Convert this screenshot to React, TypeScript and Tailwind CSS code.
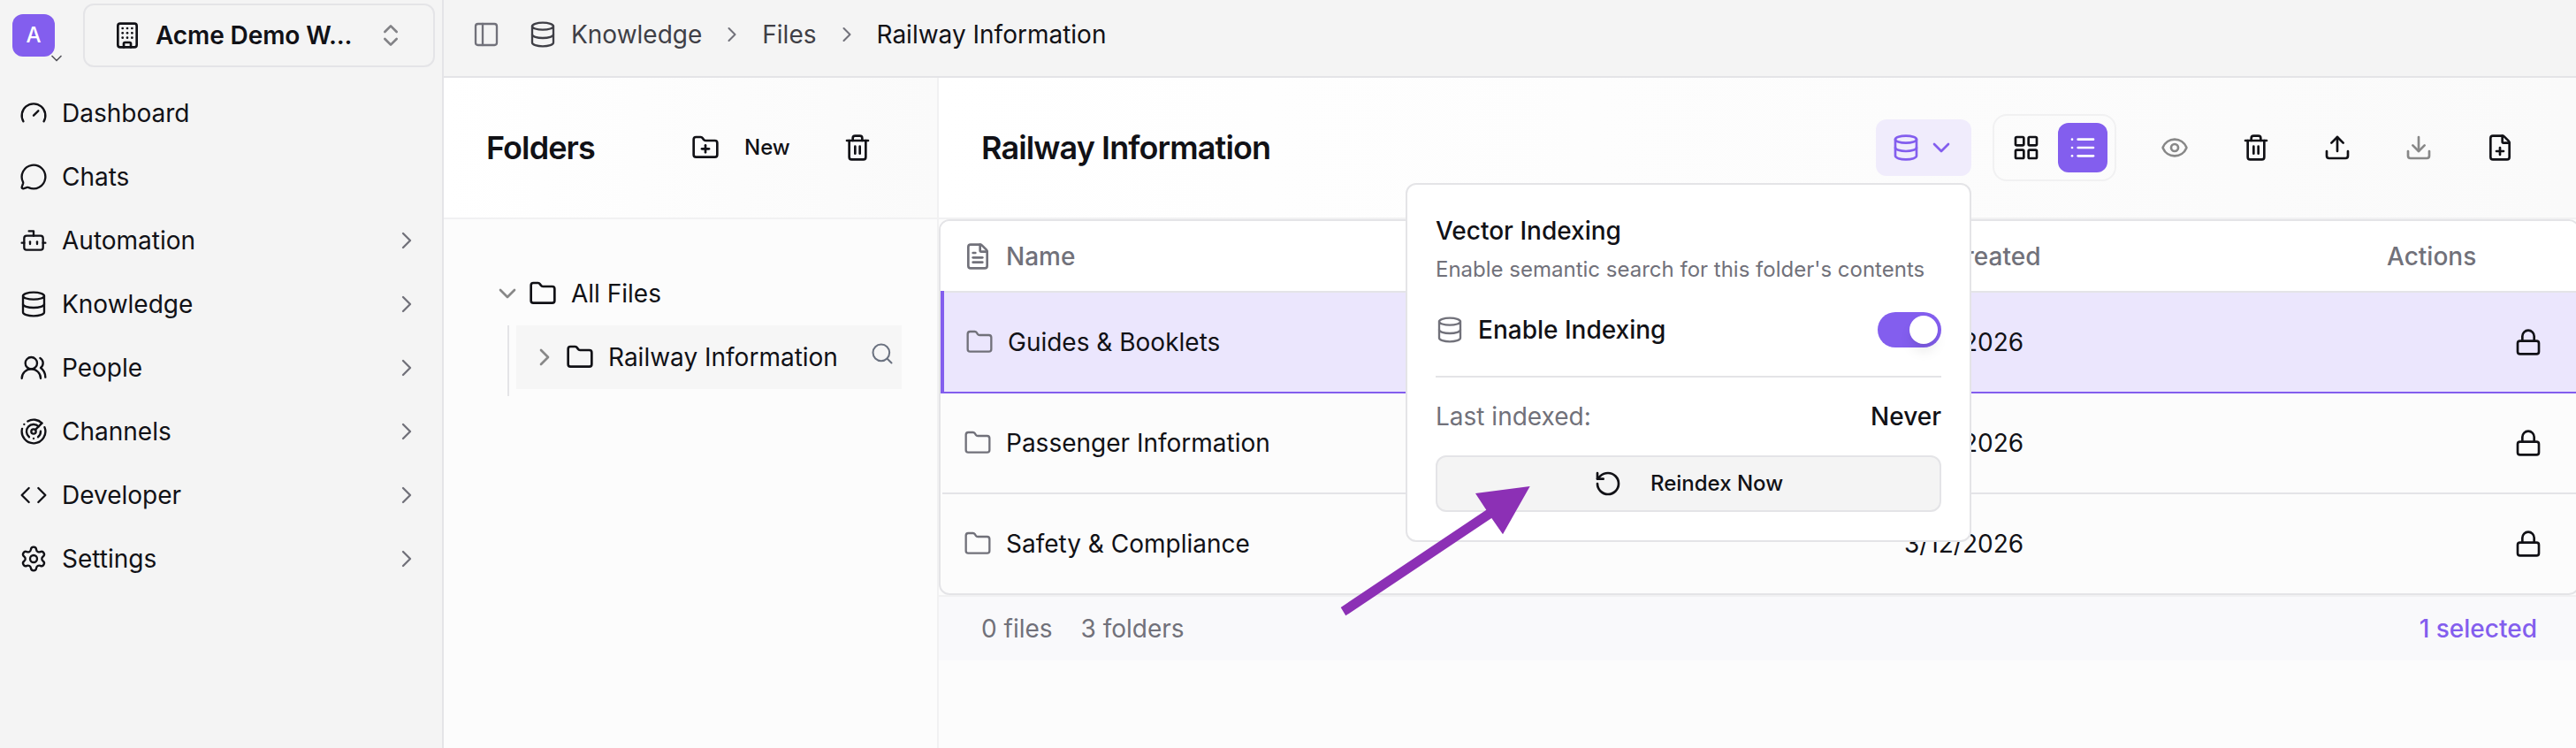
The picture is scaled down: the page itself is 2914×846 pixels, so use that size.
import React from "react";
import {
  Bot,
  Building,
  Calendar,
  ChevronDown,
  ChevronRight,
  ChevronsUpDown,
  Code,
  Database,
  Download,
  Eye,
  FilePlus,
  FileText,
  Folder,
  FolderPlus,
  Gauge,
  LayoutGrid,
  List,
  Lock,
  MessageCircle,
  PanelLeft,
  Radar,
  RotateCcw,
  Search,
  Settings,
  Trash2,
  Upload,
  UsersRound,
} from "lucide-react";

const navItems = [
  { label: "Dashboard", icon: Gauge, expandable: false },
  { label: "Chats", icon: MessageCircle, expandable: false },
  { label: "Automation", icon: Bot, expandable: true },
  { label: "Knowledge", icon: Database, expandable: true },
  { label: "People", icon: UsersRound, expandable: true },
  { label: "Channels", icon: Radar, expandable: true },
  { label: "Developer", icon: Code, expandable: true },
  { label: "Settings", icon: Settings, expandable: true },
];

const rows = [
  { name: "Guides & Booklets", created: "3/12/2026", selected: true },
  { name: "Passenger Information", created: "3/12/2026", selected: false },
  { name: "Safety & Compliance", created: "3/12/2026", selected: false },
];

function Sidebar() {
  return (
    <aside className="flex w-[502px] shrink-0 flex-col border-r-2 border-[#e4e4e7] bg-[#f4f4f4]">
      <div className="flex h-20 items-center pl-3.5">
        <div className="relative flex size-12 items-center justify-center rounded-xl bg-[#835eee] text-2xl font-medium text-white">
          A
          <ChevronDown className="absolute -right-3 -bottom-3 size-5 text-[#55555b]" />
        </div>
        <div className="ml-8 flex h-[72px] w-[398px] items-center rounded-xl border-2 border-[#e4e4e7] pl-8">
          <Building className="size-8" />
          <span className="ml-4 w-[223px] font-semibold tracking-[-0.1px] whitespace-nowrap">Acme Demo W...</span>
          <ChevronsUpDown className="ml-[27px] size-8 text-[#828286]" />
        </div>
      </div>
      <nav className="mt-3 flex flex-col">
        {navItems.map(({ label, icon: Icon, expandable }) => (
          <div key={label} className="flex h-[72px] items-center pr-6 pl-[22px]">
            <Icon strokeWidth={1.75} className="size-8" />
            <span className="ml-4 flex-1">{label}</span>
            {expandable && <ChevronRight strokeWidth={1.75} className="size-8 text-[#71717a]" />}
          </div>
        ))}
      </nav>
    </aside>
  );
}

function Breadcrumb() {
  return (
    <header className="flex h-[88px] shrink-0 items-start border-b-2 border-[#e4e4e7] bg-[#f4f4f4] pl-8">
      <div className="flex h-[78px] items-center text-[#3f3f46]">
        <PanelLeft strokeWidth={1.75} className="size-8 text-[#71717a]" />
        <Database strokeWidth={1.75} className="ml-8 size-8" />
        <span className="ml-4">Knowledge</span>
        <ChevronRight strokeWidth={1.75} className="ml-5 size-7 text-[#71717a]" />
        <span className="ml-5">Files</span>
        <ChevronRight strokeWidth={1.75} className="ml-5 size-7 text-[#71717a]" />
        <span className="ml-5 text-[#111116]">Railway Information</span>
      </div>
    </header>
  );
}

function FolderPanel() {
  return (
    <section className="flex w-[560px] shrink-0 flex-col border-r-2 border-[#f1f1f2]">
      <div className="flex h-40 shrink-0 items-center border-b-2 border-[#f1f1f2] bg-linear-to-r from-white to-[#fafafa] pl-12">
        <h2 className="w-[232px] text-4xl font-semibold tracking-tight">Folders</h2>
        <FolderPlus className="size-8" />
        <span className="ml-7 w-28 text-2xl font-medium">New</span>
        <Trash2 className="size-8" />
      </div>
      <div className="flex flex-col pt-12 pl-14">
        <div className="flex h-[72px] items-center">
          <ChevronDown className="size-8 text-[#888888]" />
          <Folder className="ml-2 size-8" />
          <span className="ml-4">All Files</span>
        </div>
        <div className="ml-4 flex h-20 items-start border-l-2 border-[#e4e4e7] pl-2">
          <div className="flex h-[72px] w-[436px] items-center bg-[#f6f6f6] pl-4">
            <ChevronRight className="size-8 text-[#888888]" />
            <Folder className="ml-2 size-8" />
            <span className="ml-4 w-[296px]">Railway Information</span>
            <Search strokeWidth={1.75} className="-mt-2 size-7 text-[#6b7280]" />
          </div>
        </div>
      </div>
    </section>
  );
}

function IndexingPopover() {
  return (
    <div className="absolute top-[72px] right-0 flex h-[406px] w-[640px] flex-col rounded-xl border-2 border-[#e4e4e7] bg-white px-8 pt-8">
      <h3 className="h-10 leading-10 font-medium">Vector Indexing</h3>
      <p className="mt-1.5 h-9 text-2xl leading-9 text-[#71717a]">Enable semantic search for this folder's contents</p>
      <div className="mt-[30px] flex h-10 items-center">
        <Database strokeWidth={1.75} className="size-8 text-[#71717a]" />
        <span className="ml-4 flex-1 font-medium">Enable Indexing</span>
        <div className="flex h-10 w-[72px] items-center justify-end rounded-full bg-[#835eee] pr-1">
          <div className="size-8 rounded-full bg-white shadow-lg" />
        </div>
      </div>
      <div className="mt-8 h-0.5 bg-[#e4e4e7]" />
      <div className="mt-6 flex h-10 items-center justify-between">
        <span className="text-[#71717a]">Last indexed:</span>
        <span className="font-medium">Never</span>
      </div>
      <div className="mt-6 flex h-16 items-center justify-center gap-8 rounded-xl border-2 border-[#e4e4e7] bg-[#f4f4f4] text-2xl font-medium">
        <RotateCcw className="size-8" />
        Reindex Now
      </div>
    </div>
  );
}

function Toolbar() {
  return (
    <div className="flex items-center">
      <div className="relative z-10 flex h-16 w-[108px] items-center gap-2 rounded-xl bg-[#f0ecfc] pl-[18px] text-[#835eee]">
        <Database className="size-8" />
        <ChevronDown className="size-8" />
        <div className="contents text-[#111116]">
          <IndexingPopover />
        </div>
      </div>
      <div className="ml-6 flex h-[76px] w-[140px] items-center gap-2 rounded-2xl border-2 border-[#f1f1f2] pl-2">
        <div className="flex size-14 items-center justify-center">
          <LayoutGrid className="size-8" />
        </div>
        <div className="flex size-14 items-center justify-center rounded-xl bg-[#835eee] text-white">
          <List className="size-8" />
        </div>
      </div>
      <div className="ml-[50px] flex gap-[60px]">
        <Eye className="size-8 text-[#888888]" />
        <Trash2 className="size-8" />
        <Upload className="size-8" />
        <Download className="size-8 text-[#888888]" />
        <FilePlus className="size-8" />
      </div>
    </div>
  );
}

function FileTable() {
  return (
    <div className="-mr-1 flex h-[425px] shrink-0 flex-col overflow-hidden rounded-xl border-2 border-[#e4e4e7]">
      <div className="flex h-[79px] shrink-0 items-center bg-white pl-[26px] font-medium text-[#71717a]">
        <FileText className="size-8" />
        <span className="ml-4 w-[1016px]">Name</span>
        <Calendar className="size-8" />
        <span className="ml-4 w-[498px]">Created</span>
        <span>Actions</span>
      </div>
      {rows.map((row) =>
        row.selected ? (
          <div key={row.name} className="flex h-[116px] shrink-0 bg-[#ebe6fd]">
            <div className="w-1 bg-[#835eee]" />
            <div className="flex flex-1 items-center border-t-2 border-b-2 border-t-[#e4e4e7] border-b-[#835eee] pl-6">
              <Folder strokeWidth={1.75} className="size-8 text-[#71717a]" />
              <span className="ml-4 w-[1014px]">{row.name}</span>
              <span className="w-[690px]">{row.created}</span>
              <Lock className="size-8" />
            </div>
          </div>
        ) : (
          <div key={row.name} className="ml-0.5 flex h-[114px] shrink-0 items-center border-b-2 border-[#e4e4e7] pl-6">
            <Folder strokeWidth={1.75} className="size-8 text-[#71717a]" />
            <span className="ml-4 w-[1016px]">{row.name}</span>
            <span className="w-[690px]">{row.created}</span>
            <Lock className="size-8" />
          </div>
        )
      )}
    </div>
  );
}

function Annotation() {
  return (
    <svg className="absolute top-[540px] left-[1500px] z-20" width="250" height="170" viewBox="0 0 250 170" fill="#8c30b5">
      <path d="M16.7 147 L181.3 36.7 L169 18 L230.7 10 L200 64.3 L187.3 46 L22.3 156.3 Z" />
    </svg>
  );
}

export default function App() {
  return (
    <div className="relative flex h-[846px] w-[2914px] overflow-hidden bg-[#fcfcfc] font-['Inter',sans-serif] text-[28px] leading-10 text-[#111116]">
      <Sidebar />
      <div className="flex min-w-0 flex-1 flex-col">
        <Breadcrumb />
        <div className="flex min-h-0 flex-1">
          <FolderPanel />
          <main className="flex min-w-0 flex-1 flex-col">
            <div className="flex h-40 shrink-0 items-center justify-between border-b-2 border-[#f1f1f2] bg-linear-to-r from-white to-[#fafafa] pr-[70px] pl-12">
              <h1 className="text-4xl font-semibold tracking-tight">Railway Information</h1>
              <Toolbar />
            </div>
            <FileTable />
            <footer className="flex h-[74px] shrink-0 items-center border-t-2 border-[#f1f1f2] bg-[#f9f9fb] pr-11 pb-px pl-12 text-[#71717a]">
              <span>0 files</span>
              <span className="ml-8 flex-1">3 folders</span>
              <span className="font-medium text-[#835eee]">1 selected</span>
            </footer>
          </main>
        </div>
      </div>
      <Annotation />
    </div>
  );
}
